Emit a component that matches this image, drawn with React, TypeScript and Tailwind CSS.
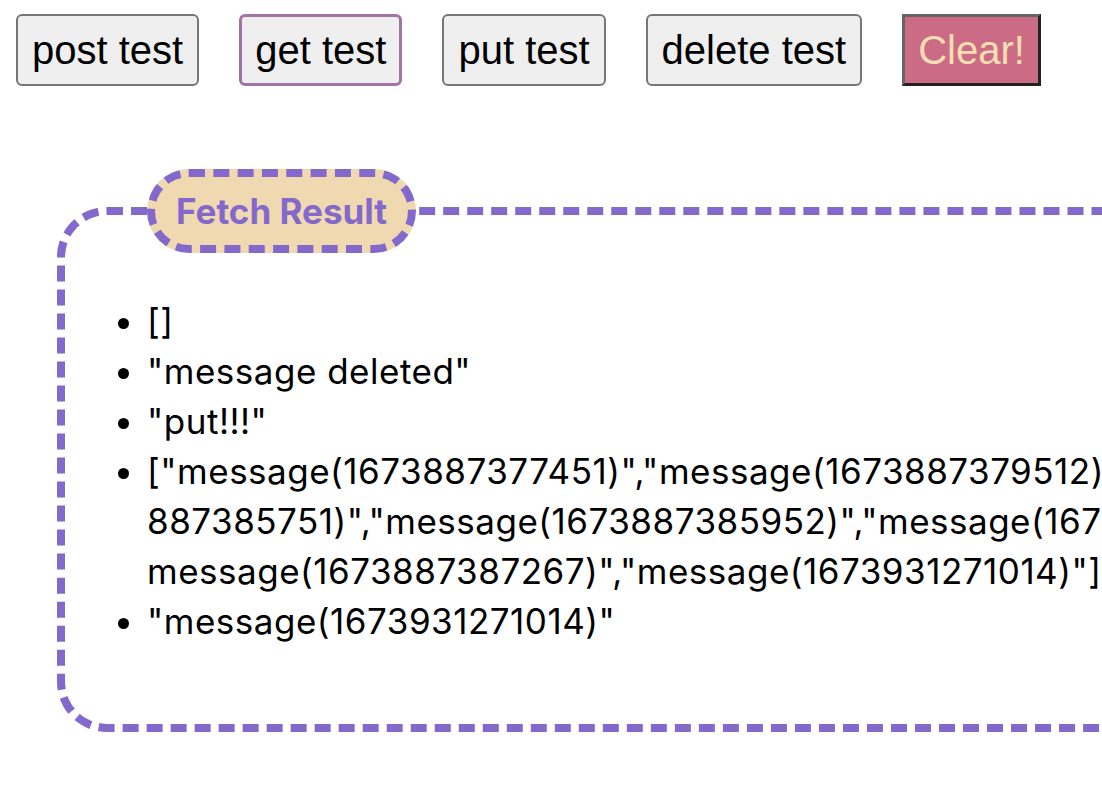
const buttons = ["post test", "get test", "put test", "delete test"];

const results: string[][] = [
  ["[]"],
  ['"message deleted"'],
  ['"put!!!"'],
  [
    '["message(1673887377451)","message(1673887379512)","message(1673',
    '887385751)","message(1673887385952)","message(1673887386443)","',
    'message(1673887387267)","message(1673931271014)"]',
  ],
  ['"message(1673931271014)"'],
];

const App = () => {
  return (
    <div className="w-[1102px] h-[808px] overflow-hidden bg-white">
      <div className="flex gap-[40px] pl-[16px] pt-[14px]">
        {buttons.map((label) =>
          label === "get test" ? (
            <button
              key={label}
              className="px-[13px] py-[9px] text-[40px] leading-[48px] font-['Liberation_Sans',Arial,sans-serif] text-black bg-[#efefef] border-[3px] border-[#a274a3] rounded-[6px]"
            >
              {label}
            </button>
          ) : (
            <button
              key={label}
              className="px-[14px] py-[10px] text-[40px] leading-[48px] font-['Liberation_Sans',Arial,sans-serif] text-black bg-[#efefef] border-2 border-[#767676] rounded-[6px]"
            >
              {label}
            </button>
          )
        )}
        <button className="px-[13px] py-[9px] text-[40px] leading-[48px] font-['Liberation_Sans',Arial,sans-serif] text-[#f5deb3] bg-[#cc6b85] border-[3px] border-t-[#666666] border-l-[#666666] border-b-[#222222] border-r-[#222222]">
          Clear!
        </button>
      </div>

      <fieldset className="ml-[57px] mt-[83px] w-[1500px] border-[8px] border-dashed border-[#8469cc] rounded-[50px] font-['Inter',sans-serif]">
        <legend className="ml-[82px] px-[21px] py-[13px] bg-[#f0d9b0] border-[8px] border-dashed border-[#8469cc] rounded-full text-[35px] leading-[42px] font-bold text-[#8469cc]">
          Fetch Result
        </legend>
        <ul className="list-disc pl-[82px] mt-[43px] mb-[78px] text-[35px] leading-[50px] tracking-[0.5px] text-black">
          {results.map((lines, i) => (
            <li key={i} className="whitespace-nowrap">
              {lines.map((line, j) => (
                <div key={j}>{line}</div>
              ))}
            </li>
          ))}
        </ul>
      </fieldset>
    </div>
  );
};

export default App;
